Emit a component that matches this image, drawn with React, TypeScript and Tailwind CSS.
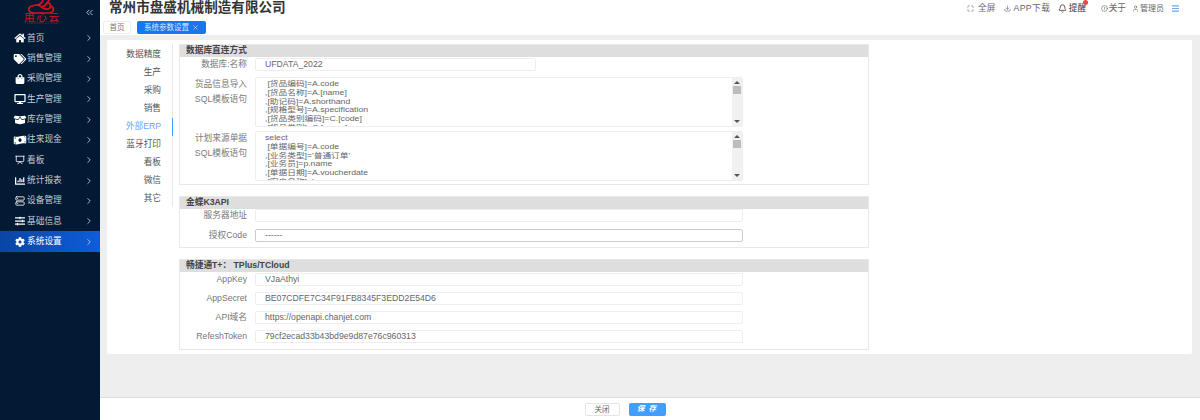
import { Bell, ChevronRight, ChevronsLeft, CircleAlert, Download, Maximize, Menu, User, X } from 'lucide-react';
import { FaBoxOpen, FaChartBar, FaCog, FaDesktop, FaHome, FaMoneyBillWave, FaShoppingBag, FaSlidersH, FaTags } from 'react-icons/fa';
import { LuPresentation, LuServer } from 'react-icons/lu';

const font = "font-['Liberation_Sans','Noto_Sans_CJK_SC',sans-serif]";

const menus = [
  { name: '首页', icon: FaHome },
  { name: '销售管理', icon: FaTags },
  { name: '采购管理', icon: FaShoppingBag },
  { name: '生产管理', icon: FaDesktop },
  { name: '库存管理', icon: FaBoxOpen },
  { name: '往来现金', icon: FaMoneyBillWave },
  { name: '看板', icon: LuPresentation },
  { name: '统计报表', icon: FaChartBar },
  { name: '设备管理', icon: LuServer },
  { name: '基础信息', icon: FaSlidersH },
  { name: '系统设置', icon: FaCog, active: true },
];

const sideTabs = ['数据精度', '生产', '采购', '销售', '外部ERP', '蓝牙打印', '看板', '微信', '其它'];

const sql1 = [' [货品编码]=A.code', ',[货品名称]=A.[name]', ',[助记码]=A.shorthand', ',[规格型号]=A.specification', ',[货品类别编码]=C.[code]', ',[货品类别]=C.[name]'];
const sql2 = ['select', ' [单据编号]=A.code', ",[业务类型]='普通订单'", ',[业务员]=p.name', ',[单据日期]=A.voucherdate', ',[客户名称]=b.name'];

function Section({ title, className, children }: { title: string; className: string; children: React.ReactNode }) {
  return (
    <div className={`border border-[#e8e8e8] ${className}`}>
      <div className="flex h-3 items-center bg-[#dedede] pl-[6px] font-bold text-[#444]">{title}</div>
      {children}
    </div>
  );
}

function Field({ label, value, width = 'w-[488px]', dark, className = '' }: { label: string; value?: string; width?: string; dark?: boolean; className?: string }) {
  return (
    <div className={`flex items-center ${className}`}>
      <div className="w-[67px] text-right text-[#777]">{label}</div>
      <div className={`ml-[8px] flex h-[13px] items-center rounded-[2px] border pl-[9px] text-[#666] ${dark ? 'border-[#ccc]' : 'border-[#eee]'} ${width}`}>{value}</div>
    </div>
  );
}

function SqlBox({ labels, lines, className = '' }: { labels: string[]; lines: string[]; className?: string }) {
  return (
    <div className={`flex ${className}`}>
      <div className="w-[67px] leading-[15px] text-right text-[#777]">
        {labels.map((l) => (
          <div key={l}>{l}</div>
        ))}
      </div>
      <div className="ml-[8px] flex h-[50px] w-[488px] overflow-hidden rounded-[2px] border border-[#eee]">
        <div className="min-w-0 flex-1 overflow-hidden">
          <div className="origin-top scale-y-[0.8] whitespace-pre pl-[9px] pt-[2px] leading-[11.1px] text-[#666]">
            {lines.map((l) => (
              <div key={l}>{l}</div>
            ))}
          </div>
        </div>
        <div className="flex w-[10px] flex-col items-center bg-[#f1f1f1]">
          <div className="mt-[3px] h-0 w-0 border-x-[3px] border-b-[3px] border-x-transparent border-b-[#555]" />
          <div className="mt-[2px] h-2 w-2 bg-[#bdbdbd]" />
          <div className="mt-auto mb-[3px] h-0 w-0 border-x-[3px] border-t-[3px] border-x-transparent border-t-[#555]" />
        </div>
      </div>
    </div>
  );
}

export default function App() {
  return (
    <div className={`flex h-[420px] w-[1200px] overflow-hidden bg-white text-[8.7px] ${font}`}>
      <aside className="flex w-[100px] shrink-0 flex-col bg-[#021a33] text-[#c5ccd6]">
        <div className="relative h-[28px]">
          <svg viewBox="0 0 28 14" className="absolute left-[27px] top-0 h-[14px] w-[28px]" fill="none" stroke="#d8141c" strokeWidth="1.7">
            <path d="M7 13 C1 13 0 7 5 6 C8 5 10 4 13 6 C15 8 17 10 21 9 C25 8 24 3 20 2" />
            <path d="M7 13 H21 C27 13 28 8 24 6" />
            <path d="M16 0 C15 3 12 5 9 5 M22 0 C20 4 18 6 15 7" />
          </svg>
          <div className="absolute left-[24px] top-[12px] text-[10.5px] leading-[11px] tracking-[1.8px] text-[#d8141c]">用心云</div>
          <div className="absolute left-[24px] top-[22px] whitespace-nowrap text-[3.5px] leading-[3px] tracking-[0.4px] text-[#b01a22]">YONGXIN CLOUD</div>
          <ChevronsLeft size={11} strokeWidth={2} className="absolute left-[84px] top-[7px] text-[#c5ccd6]" />
        </div>
        {menus.map((m) => (
          <div
            key={m.name}
            className={`flex h-[20.35px] items-center pl-[13px] pr-[6px] ${m.active ? 'bg-gradient-to-r from-[#0a45a5] to-[#0d5ddc] text-white' : ''}`}
          >
            <m.icon size={10} className="w-[14px] shrink-0 text-white" />
            <span className="flex-1">{m.name}</span>
            <ChevronRight size={10} strokeWidth={2} className="text-[#c5ccd6]" />
          </div>
        ))}
      </aside>

      <main className="flex min-w-0 flex-1 flex-col">
        <header className="flex h-[19px] items-start pl-[9px] pr-[20px]">
          <h1 className="mt-[1px] flex-1 text-[13.6px] font-bold leading-[13px] text-[#333]">常州市盘盛机械制造有限公司</h1>
          <div className="mt-[2px] flex items-center text-[#666]">
            <Maximize size={7} />
            <span className="ml-[4px]">全屏</span>
            <Download size={7} className="ml-[9px]" />
            <span className="ml-[2px] tracking-[0.4px]">APP下载</span>
            <Bell size={9} className="ml-[8px] text-[#333]" />
            <span className="relative ml-[1.5px] text-[#333]">
              提醒
              <span className="absolute -top-[2.5px] right-[-2px] h-[5px] w-[5px] rounded-full bg-[#ef4444]" />
            </span>
            <CircleAlert size={7} className="ml-[14.5px]" />
            <span className="ml-[1px]">关于</span>
            <User size={7} className="ml-[6px]" />
            <span className="ml-[1px] text-[8px]">管理员</span>
            <Menu size={9} strokeWidth={3} className="ml-[7px] text-[#6aa6e8]" />
          </div>
        </header>

        <div className="flex h-[16px] items-start gap-[6px] pl-[3px] pt-[2px] text-[7.5px] shadow-[0_1px_2px_rgba(0,0,0,0.15)]">
          <div className="flex h-[13px] w-[28px] items-center justify-center rounded-[2px] border border-[#eee] text-[#777]">首页</div>
          <div className="flex h-[13px] w-[69px] items-center justify-center gap-[3px] rounded-[2px] bg-[#1677f0] text-[#dbe8fb]">
            系统参数设置
            <X size={7} />
          </div>
        </div>

        <div className="flex-1 bg-[#eeeeee] px-[7px] pt-[5px]">
          <div className="flex h-[314px] w-[1085px] rounded-[2px] bg-white pt-[4px]">
            <nav className="h-[163px] w-[66px] border-r border-[#e8e8e8] pt-[1.5px] text-[#555]">
              {sideTabs.map((t) => (
                <div
                  key={t}
                  className={`flex h-[18px] items-center justify-end pr-[11px] ${t === '外部ERP' ? 'text-[#60a5fa] shadow-[1px_0_0_#409eff]' : ''}`}
                >
                  {t}
                </div>
              ))}
            </nav>
            <div className="ml-[6px]">
              <Section title="数据库直连方式" className="h-[141px] w-[690px]">
                <Field label="数据库:名称" value="UFDATA_2022" width="w-[281px]" className="mt-[1px]" />
                <SqlBox labels={['货品信息导入', 'SQL模板语句']} lines={sql1} className="mt-[6px]" />
                <SqlBox labels={['计划来源单据', 'SQL模板语句']} lines={sql2} className="mt-[4px]" />
              </Section>
              <Section title="金蝶K3API" className="mt-[11px] h-[52px] w-[690px]">
                <Field label="服务器地址" />
                <Field label="授权Code" value="------" dark className="mt-[7px]" />
              </Section>
              <Section title="畅捷通T+： TPlus/TCloud" className="mt-[11px] h-[91px] w-[690px]">
                <Field label="AppKey" value="VJaAthyi" className="mt-[1px]" />
                <Field label="AppSecret" value="BE07CDFE7C34F91FB8345F3EDD2E54D6" className="mt-[6px]" />
                <Field label="API域名" value="https://openapi.chanjet.com" className="mt-[6px]" />
                <Field label="RefeshToken" value="79cf2ecad33b43bd9e9d87e76c960313" className="mt-[6px]" />
              </Section>
            </div>
          </div>
        </div>

        <footer className="flex h-[23px] items-center justify-center gap-[9px] border-t border-[#dcdcdc] bg-white pr-[50px]">
          <button className="h-[13px] w-[35px] rounded-[2px] border border-[#e5e5e5] text-[7.5px] text-[#666]">关闭</button>
          <button className="h-[13px] w-[37px] rounded-[2px] bg-[#409eff] text-[7.5px] font-bold italic tracking-[1px] text-white">保 存</button>
        </footer>
      </main>
    </div>
  );
}
